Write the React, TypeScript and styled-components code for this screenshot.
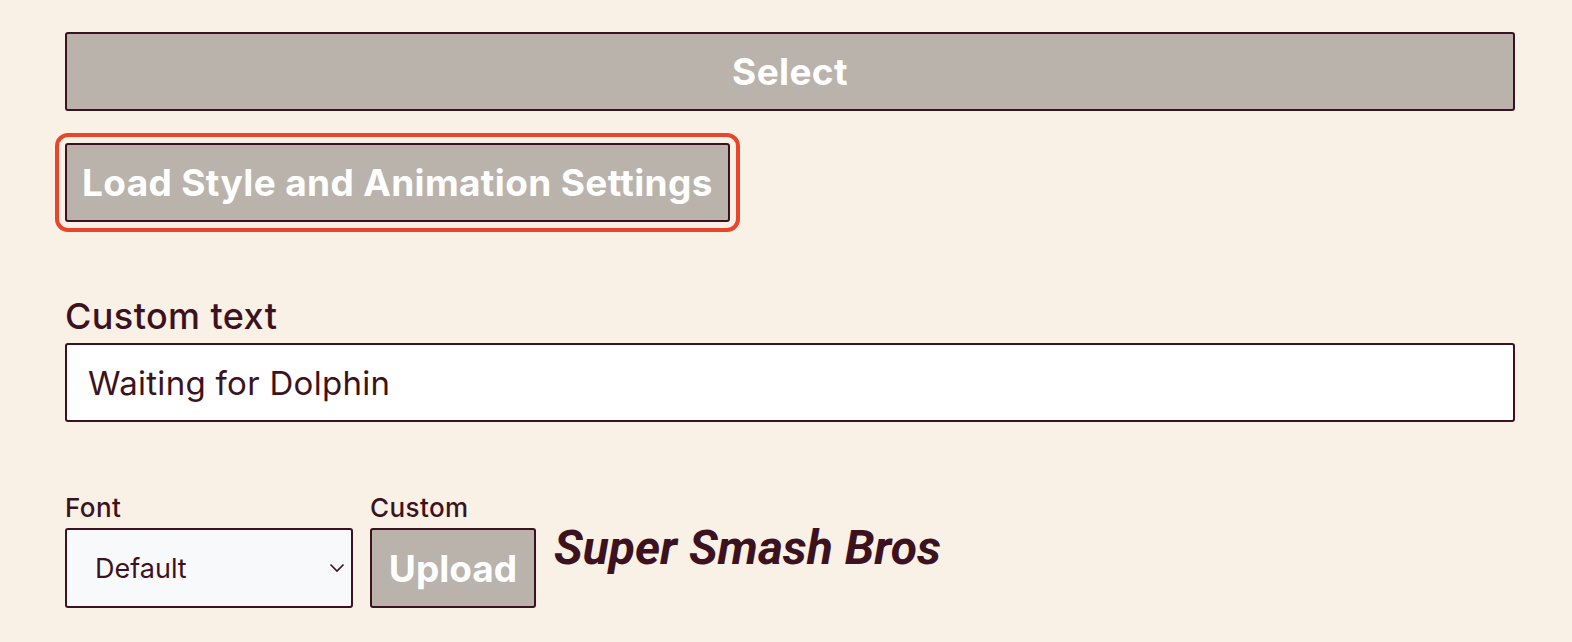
import styled, { createGlobalStyle } from 'styled-components';

const ink = '#3d1220';

const GlobalStyle = createGlobalStyle`
  body {
    margin: 0;
    background: #f9f0e6;
    font-family: Inter, "Noto Sans", sans-serif;
    color: ${ink};
  }
`;

const Page = styled.div`
  padding: 32px 0 0 65px;
  width: 1450px;
  min-height: 610px;
`;

const Button = styled.button<{ $wide?: boolean; $focused?: boolean }>`
  display: block;
  box-sizing: border-box;
  width: ${(p) => (p.$wide ? '100%' : 'auto')};
  height: 79px;
  padding: 0 15px;
  background: #bab3ac;
  border: 2px solid ${ink};
  border-radius: 3px;
  color: #fff;
  font-family: Inter, sans-serif;
  font-weight: 700;
  font-size: 37px;
  letter-spacing: 0.35px;
  cursor: pointer;
  outline: ${(p) => (p.$focused ? '4px solid #e8452b' : 'none')};
  outline-offset: 6px;
`;

const Stack = styled.div`
  display: flex;
  flex-direction: column;
  align-items: flex-start;
  gap: 32px;
`;

const Field = styled.div`
  margin-top: 75px;
`;

const BigLabel = styled.label`
  display: block;
  font-size: 36px;
  font-weight: 500;
  letter-spacing: 0.4px;
  line-height: 38px;
  margin-bottom: 8px;
`;

const TextInput = styled.input`
  display: block;
  box-sizing: border-box;
  width: 100%;
  height: 79px;
  padding: 0 21px;
  border: 2px solid ${ink};
  border-radius: 3px;
  background: #fff;
  color: ${ink};
  font-family: Inter, sans-serif;
  font-size: 33px;
  letter-spacing: 0.3px;
  outline: none;
`;

const Row = styled.div`
  display: flex;
  align-items: flex-start;
  gap: 17px;
  margin-top: 71px;
`;

const Group = styled.div`
  display: flex;
  flex-direction: column;
`;

const SmallLabel = styled.label`
  display: block;
  font-size: 26px;
  font-weight: 500;
  letter-spacing: 0.4px;
  line-height: 29px;
  height: 29px;
  margin-bottom: 6px;
`;

const SelectBox = styled.div`
  position: relative;
  box-sizing: border-box;
  width: 288px;
  height: 80px;
  border: 2px solid ${ink};
  border-radius: 3px;
  background: #f8f9fb;
  display: flex;
  align-items: center;
  padding-left: 28px;
  font-size: 27px;
`;

const Chevron = styled.svg`
  position: absolute;
  right: 6px;
  top: 33px;
`;

const Upload = styled(Button)`
  width: 166px;
  height: 80px;
  padding: 0;
  font-size: 37px;
  letter-spacing: 0;
`;

const Title = styled.div`
  font-family: Roboto, sans-serif;
  font-style: italic;
  font-weight: 700;
  font-size: 48px;
  line-height: 48px;
  padding-top: 31px;
  margin-left: 1px;
`;

export default function App() {
  return (
    <Page>
      <GlobalStyle />
      <Stack>
        <Button $wide>Select</Button>
        <Button $focused>Load Style and Animation Settings</Button>
      </Stack>
      <Field>
        <BigLabel>Custom text</BigLabel>
        <TextInput defaultValue="Waiting for Dolphin" />
      </Field>
      <Row>
        <Group>
          <SmallLabel>Font</SmallLabel>
          <SelectBox>
            Default
            <Chevron width="16" height="10" viewBox="0 0 16 10">
              <path d="M1.5 1.5 L8 8 L14.5 1.5" fill="none" stroke={ink} strokeWidth="1.6" />
            </Chevron>
          </SelectBox>
        </Group>
        <Group>
          <SmallLabel>Custom</SmallLabel>
          <Upload>Upload</Upload>
        </Group>
        <Title>Super Smash Bros</Title>
      </Row>
    </Page>
  );
}
